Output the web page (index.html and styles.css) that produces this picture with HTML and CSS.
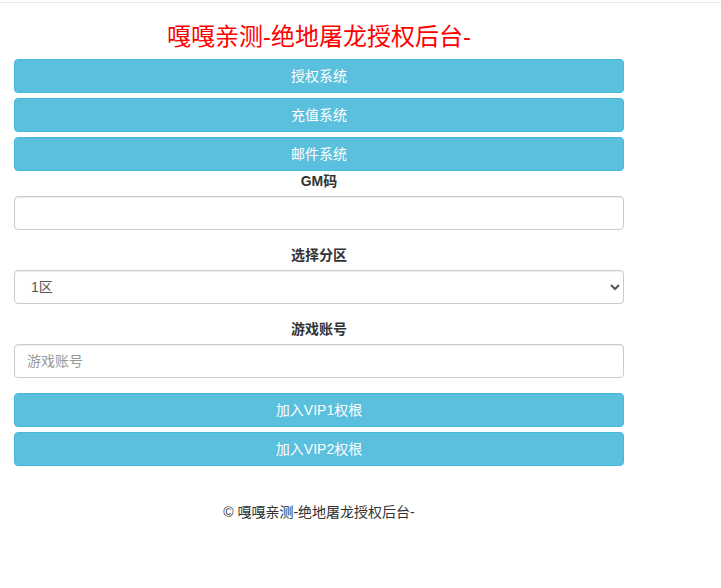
FILE: index.html
```html
<!DOCTYPE html>
<html lang="zh-CN">
<head>
<meta charset="utf-8">
<title>嘎嘎亲测-绝地屠龙授权后台-</title>
<link rel="stylesheet" href="styles.css">
</head>
<body>
<div class="topline"></div>
<div class="container">
  <h3 class="title">嘎嘎亲测-绝地屠龙授权后台-</h3>
  <div class="btn-group">
    <button class="btn">授权系统</button>
    <button class="btn">充值系统</button>
    <button class="btn">邮件系统</button>
  </div>
  <form class="form">
    <div class="field">
      <label class="label">GM码</label>
      <input class="control" type="text">
    </div>
    <div class="field">
      <label class="label">选择分区</label>
      <select class="control select">
        <option>1区</option>
      </select>
    </div>
    <div class="field">
      <label class="label">游戏账号</label>
      <input class="control" type="text" placeholder="游戏账号">
    </div>
    <div class="btn-group">
      <button class="btn" type="button">加入VIP1权根</button>
      <button class="btn" type="button">加入VIP2权根</button>
    </div>
  </form>
  <p class="footer">© 嘎嘎亲测-绝地屠龙授权后台-</p>
</div>
</body>
</html>
```
FILE: styles.css
```css
* { box-sizing: border-box; }
html, body {
  margin: 0;
  padding: 0;
  background: #fff;
  font-family: "Liberation Sans", "Noto Sans CJK SC", sans-serif;
  font-size: 14px;
  line-height: 20px;
  color: #333;
}
.topline {
  margin-top: 2px;
  height: 1px;
  background: #e6e6e6;
}
.container {
  width: 610px;
  margin-left: 14px;
}
.title {
  margin: 20px 0 8px;
  font-size: 24px;
  line-height: 28px;
  font-weight: normal;
  color: #ff0000;
  text-align: center;
}
.btn-group {
  display: flex;
  flex-direction: column;
  gap: 5px;
}
.btn {
  display: block;
  width: 100%;
  height: 34px;
  padding: 6px 12px;
  font-family: inherit;
  font-size: 14px;
  line-height: 20px;
  color: #fff;
  background: #5bc0de;
  border: 1px solid #46b8da;
  border-radius: 4px;
  text-align: center;
  cursor: pointer;
}
.form {
  margin: 0;
  display: flex;
  flex-direction: column;
}
.field {
  display: flex;
  flex-direction: column;
  gap: 5px;
  margin-bottom: 15px;
}
.label {
  display: block;
  font-weight: bold;
  text-align: center;
}
.control {
  display: block;
  width: 100%;
  height: 34px;
  padding: 6px 12px;
  font-family: inherit;
  font-size: 14px;
  line-height: 20px;
  color: #555;
  background: #fff;
  border: 1px solid #ccc;
  border-radius: 4px;
  box-shadow: inset 0 1px 1px rgba(0,0,0,0.075);
}
.control::placeholder { color: #999; }
.select { padding: 6px 8px 6px 12px; }
.footer {
  margin: 36px 0 0;
  text-align: center;
}
```
